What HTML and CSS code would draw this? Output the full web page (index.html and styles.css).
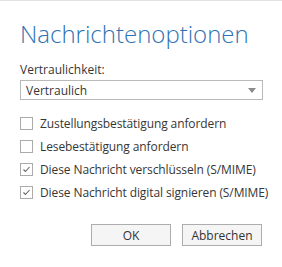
FILE: index.html
```html
<!DOCTYPE html>
<html lang="de">
<head>
<meta charset="utf-8">
<link rel="stylesheet" href="styles.css">
</head>
<body>
<div class="dialog">
  <h1 class="title">Nachrichtenoptionen</h1>
  <label class="label">Vertraulichkeit:</label>
  <div class="select">
    <span class="select-value">Vertraulich</span>
    <svg class="arrow" width="8" height="5" viewBox="0 0 8 5"><path d="M0 0H8L4 5Z" fill="#8a8a8a"/></svg>
  </div>
  <ul class="options">
    <li class="option"><span class="box"></span><span>Zustellungsbestätigung anfordern</span></li>
    <li class="option"><span class="box"></span><span>Lesebestätigung anfordern</span></li>
    <li class="option"><span class="box"><svg width="11" height="11" viewBox="0 0 11 11"><path d="M2.5 5.5L4.5 7.5L8.5 3" fill="none" stroke="#666" stroke-width="1.1"/></svg></span><span>Diese Nachricht verschlüsseln (S/MIME)</span></li>
    <li class="option"><span class="box"><svg width="11" height="11" viewBox="0 0 11 11"><path d="M2.5 5.5L4.5 7.5L8.5 3" fill="none" stroke="#666" stroke-width="1.1"/></svg></span><span>Diese Nachricht digital signieren (S/MIME)</span></li>
  </ul>
  <div class="buttons">
    <button class="btn">OK</button>
    <button class="btn">Abbrechen</button>
  </div>
</div>
</body>
</html>
```

FILE: styles.css
```css
* { box-sizing: border-box; }
html, body { margin: 0; padding: 0; background: #fff; }
body {
  border-top: 1px solid #e2e2e2;
  font-family: "Open Sans", "Noto Sans", sans-serif;
  color: #363636;
  font-size: 12px;
}
.dialog {
  padding: 18px 19px 0 20px;
  display: flex;
  flex-direction: column;
}
.title {
  margin: 0;
  font-weight: 300;
  font-size: 24px;
  line-height: 30px;
  color: #2f72b3;
}
.label {
  margin-top: 13px;
  line-height: 16px;
}
.select {
  margin-top: 2px;
  height: 20px;
  border: 1px solid #b9b9b9;
  display: flex;
  align-items: center;
  justify-content: space-between;
  padding: 0 6px 0 5px;
}
.arrow { display: block; }
.options {
  list-style: none;
  margin: 17px 0 0 0;
  padding: 0;
  display: flex;
  flex-direction: column;
  gap: 10px;
}
.option {
  display: flex;
  align-items: center;
  gap: 7px;
  height: 13px;
  line-height: 14px;
  white-space: nowrap;
  letter-spacing: -0.1px;
}
.box {
  width: 13px;
  height: 13px;
  border: 1px solid #ababab;
  display: flex;
  align-items: center;
  justify-content: center;
  flex: none;
}
.box svg { display: block; }
.buttons {
  margin-top: 25px;
  display: flex;
  justify-content: flex-end;
  gap: 11px;
  padding-right: 1px;
}
.btn {
  width: 80px;
  height: 22px;
  border: 1px solid #adadad;
  background: #f5f5f5;
  font-family: inherit;
  font-size: 12px;
  color: #333;
  padding: 0;
}
```
